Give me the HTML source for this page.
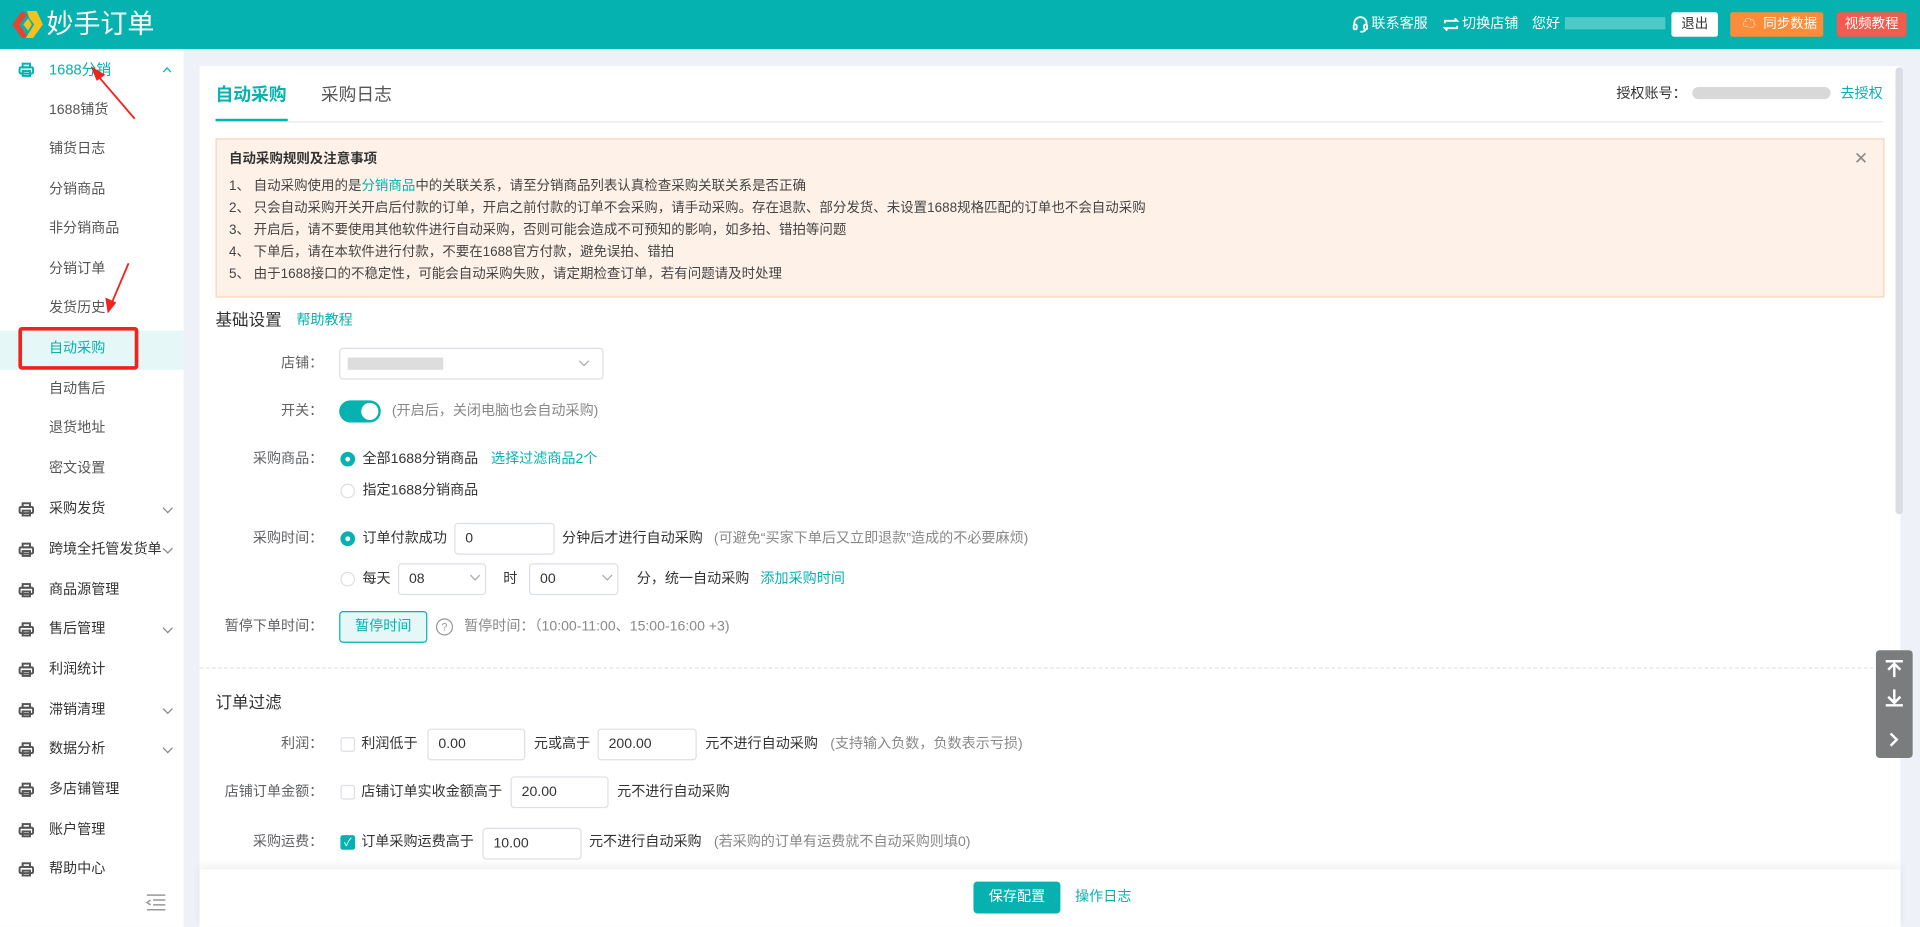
<!DOCTYPE html>
<html><head><meta charset="utf-8"><style>
html,body{margin:0;padding:0;width:1920px;height:927px;overflow:hidden;background:#eef1f8}
#w{position:absolute;left:0;top:0;width:1568px;height:757px;transform:scale(1.22449);transform-origin:0 0;font-family:"Liberation Sans","Noto Sans CJK SC",sans-serif;font-size:11.5px;color:#333}
#w div,#w span{position:absolute;white-space:nowrap}
.t{line-height:16px}
.hdr{left:0;top:0;width:1568px;height:40px;background:#05b2b0}
.side{left:0;top:40px;width:150px;height:717px;background:#fff}
.card{left:163px;top:54px;width:1389px;height:703px;background:#fff}
.teal{color:#05b2b0}
.lbl{color:#606266;text-align:right;width:120px}
.inp{border:1px solid #dcdfe6;border-radius:3px;background:#fff;box-sizing:border-box;height:26px;line-height:24px;padding-left:8px;color:#333}
.chev{width:5px;height:5px;border-right:1px solid #aaa;border-bottom:1px solid #aaa;transform:rotate(45deg)}
.radio{width:12px;height:12px;border-radius:50%;box-sizing:border-box;border:1px solid #dcdfe6;background:#fff}
.radio.on{border:4px solid #05b2b0}
.cb{width:12px;height:12px;border:1px solid #dcdfe6;border-radius:2px;box-sizing:border-box;background:#fff}
.mi{color:#333}
.sub{color:#555}
</style></head><body><div id="w">
<div class="hdr"></div>
<svg style="position:absolute;left:8px;top:7px" width="28" height="26" viewBox="0 0 28 26"><path d="M10 2 L2 13 L10 24 L15 24 L8 13 L14 5 Z" fill="#e8432f"/><path d="M14 2 L22 2 L27 13 L19 24 L13 24 L20 13 L16 8 Z" fill="#f6c21a"/><path d="M11 13 L15 8 L18 13 L15 18 Z" fill="#f6c21a"/></svg>
<div class="t" style="left:38px;top:8px;line-height:24px;font-size:22px;color:#fff">妙手订单</div>
<svg style="position:absolute;left:1104px;top:13px" width="14" height="14" viewBox="0 0 14 14" fill="none" stroke="#fff" stroke-width="1.5"><path d="M2 8 V6 a5 5 0 0 1 10 0 V8"/><rect x="1.5" y="7" width="2.5" height="4" rx="1"/><rect x="10" y="7" width="2.5" height="4" rx="1"/><path d="M11 11 q0 2 -4 2"/></svg>
<div class="t" style="left:1120px;top:12px;color:#fff">联系客服</div>
<svg style="position:absolute;left:1178px;top:13px" width="14" height="14" viewBox="0 0 14 14" fill="none" stroke="#fff" stroke-width="1.5"><path d="M2 6 V4 H12 L10 2"/><path d="M12 8 V10 H2 L4 12"/></svg>
<div class="t" style="left:1194px;top:12px;color:#fff">切换店铺</div>
<div class="t" style="left:1251px;top:12px;color:#fff">您好</div>
<div style="left:1278px;top:14px;width:82px;height:10px;background:#5fcfcc;opacity:.8"></div>
<div style="left:1365px;top:10px;width:38px;height:20px;background:#fff;border-radius:2px;text-align:center;line-height:20px;font-size:11px;color:#333">退出</div>
<div style="left:1413px;top:10px;width:76px;height:20px;background:#fb8c3a;border-radius:2px;line-height:20px;font-size:11px;color:#fff"><span style="left:10px;top:0">☁</span><span style="left:27px;top:0">同步数据</span></div>
<div style="left:1500px;top:10px;width:57px;height:20px;background:#f25b4d;border-radius:2px;text-align:center;line-height:20px;font-size:11px;color:#fff">视频教程</div>

<div class="side"></div>
<svg style="position:absolute;left:15px;top:51px" width="13" height="12" viewBox="0 0 13 12" fill="none" stroke="#05b2b0" stroke-width="1.6"><rect x="3.5" y="1" width="6" height="3"/><rect x="1" y="4" width="11" height="5" rx="1"/><rect x="3.5" y="7" width="6" height="4"/></svg>
<div class="t teal" style="left:40px;top:49px;font-size:12px">1688分销</div>
<div style="left:134px;top:56px;width:4px;height:4px;border-left:1px solid #05b2b0;border-top:1px solid #05b2b0;transform:rotate(45deg)"></div>
<div class="t sub" style="left:40px;top:82px">1688铺货</div>
<div class="t sub" style="left:40px;top:114px">铺货日志</div>
<div class="t sub" style="left:40px;top:147px">分销商品</div>
<div class="t sub" style="left:40px;top:179px">非分销商品</div>
<div class="t sub" style="left:40px;top:212px">分销订单</div>
<div class="t sub" style="left:40px;top:244px">发货历史</div>
<div style="left:0;top:270px;width:150px;height:32px;background:#e6f7f7"></div>
<div style="left:15px;top:267px;width:92px;height:29px;border:3px solid #f0241f;border-radius:3px"></div>
<div class="t teal" style="left:40px;top:277px">自动采购</div>
<div class="t sub" style="left:40px;top:310px">自动售后</div>
<div class="t sub" style="left:40px;top:342px">退货地址</div>
<div class="t sub" style="left:40px;top:375px">密文设置</div>
<svg style="position:absolute;left:0;top:40px" width="150" height="240" viewBox="0 40 150 240"><path d="M110 97 L80 62" stroke="#f0241f" stroke-width="1.5"/><path d="M74 54 L86 61 L79 66 Z" fill="#f0241f"/><path d="M105 215 L91 248" stroke="#f0241f" stroke-width="1.5"/><path d="M88 256 L86 243 L95 247 Z" fill="#f0241f"/></svg>

<div id="menu"></div>
<svg style="position:absolute;left:118px;top:730px" width="18" height="14" viewBox="0 0 18 14" stroke="#999" stroke-width="1.2" fill="none"><path d="M2 1 H17 M7 5 H17 M7 9 H17 M2 13 H17 M5 5 L2 7 L5 9"/></svg>

<div class="card"></div>
<div style="left:1548px;top:55px;width:6px;height:365px;background:#d9dce3;border-radius:3px"></div>
<div class="t teal" style="left:176px;top:68px;font-size:14.5px;line-height:20px;font-weight:bold">自动采购</div>
<div class="t" style="left:262px;top:68px;font-size:14.5px;line-height:20px;color:#555">采购日志</div>
<div style="left:176px;top:99px;width:1362px;height:1px;background:#e8e8e8"></div>
<div style="left:176px;top:97px;width:59px;height:2px;background:#05b2b0"></div>
<div class="t" style="left:1320px;top:69px">授权账号：</div>
<div style="left:1382px;top:71px;width:113px;height:10px;background:#d8d8d8;border-radius:5px"></div>
<div class="t teal" style="left:1503px;top:69px">去授权</div>

<div style="left:176px;top:113px;width:1361px;height:128px;background:#fef1e8;border:1px solid #fbd3b4"></div>
<div class="t" style="left:187px;top:122px;font-weight:bold;font-size:11px">自动采购规则及注意事项</div>
<div class="t" style="left:1514px;top:121px;font-size:14px;color:#888">✕</div>
<div class="t" style="left:187px;top:144px;font-size:11px;color:#444">1、 自动采购使用的是<span class="teal" style="position:static">分销商品</span>中的关联关系，请至分销商品列表认真检查采购关联关系是否正确</div>
<div class="t" style="left:187px;top:162px;font-size:11px;color:#444">2、 只会自动采购开关开启后付款的订单，开启之前付款的订单不会采购，请手动采购。存在退款、部分发货、未设置1688规格匹配的订单也不会自动采购</div>
<div class="t" style="left:187px;top:180px;font-size:11px;color:#444">3、 开启后，请不要使用其他软件进行自动采购，否则可能会造成不可预知的影响，如多拍、错拍等问题</div>
<div class="t" style="left:187px;top:198px;font-size:11px;color:#444">4、 下单后，请在本软件进行付款，不要在1688官方付款，避免误拍、错拍</div>
<div class="t" style="left:187px;top:216px;font-size:11px;color:#444">5、 由于1688接口的不稳定性，可能会自动采购失败，请定期检查订单，若有问题请及时处理</div>

<div class="t" style="left:176px;top:254px;font-size:13.5px">基础设置</div>
<div class="t teal" style="left:242px;top:254px;font-size:11.5px">帮助教程</div>

<div class="t lbl" style="left:144px;top:289px">店铺：</div>
<div class="inp" style="left:277px;top:284px;width:216px"></div>
<div style="left:284px;top:292px;width:78px;height:10px;background:#d5d5d5;opacity:.8"></div>
<div class="chev" style="left:474px;top:292px"></div>

<div class="t lbl" style="left:144px;top:328px">开关：</div>
<div style="left:277px;top:327px;width:34px;height:18px;background:#05b2b0;border-radius:9px"></div>
<div style="left:295px;top:329px;width:14px;height:14px;background:#fff;border-radius:50%"></div>
<div class="t" style="left:320px;top:328px;color:#888">(开启后，关闭电脑也会自动采购)</div>

<div class="t lbl" style="left:144px;top:367px">采购商品：</div>
<div class="radio on" style="left:278px;top:369px"></div>
<div class="t" style="left:296px;top:367px">全部1688分销商品</div>
<div class="t teal" style="left:401px;top:367px">选择过滤商品2个</div>
<div class="radio" style="left:278px;top:395px"></div>
<div class="t" style="left:296px;top:393px">指定1688分销商品</div>

<div class="t lbl" style="left:144px;top:432px">采购时间：</div>
<div class="radio on" style="left:278px;top:434px"></div>
<div class="t" style="left:296px;top:432px">订单付款成功</div>
<div class="inp" style="left:371px;top:427px;width:82px">0</div>
<div class="t" style="left:459px;top:432px">分钟后才进行自动采购</div>
<div class="t" style="left:583px;top:432px;color:#888">(可避免“买家下单后又立即退款”造成的不必要麻烦)</div>
<div class="radio" style="left:278px;top:467px"></div>
<div class="t" style="left:296px;top:465px">每天</div>
<div class="inp" style="left:325px;top:460px;width:72px">08</div><div class="chev" style="left:385px;top:467px"></div>
<div class="t" style="left:411px;top:465px">时</div>
<div class="inp" style="left:432px;top:460px;width:73px">00</div><div class="chev" style="left:493px;top:467px"></div>
<div class="t" style="left:520px;top:465px">分，统一自动采购</div>
<div class="t teal" style="left:621px;top:465px">添加采购时间</div>

<div class="t lbl" style="left:144px;top:504px">暂停下单时间：</div>
<div style="left:277px;top:499px;width:72px;height:26px;box-sizing:border-box;background:#e6f7f7;border:1px solid #05b2b0;border-radius:3px;text-align:center;line-height:24px;color:#05b2b0">暂停时间</div>
<div style="left:356px;top:505px;width:12px;height:12px;border:1px solid #999;border-radius:50%;font-size:9px;line-height:12px;text-align:center;color:#999">?</div>
<div class="t" style="left:379px;top:504px;color:#888">暂停时间：（10:00-11:00、15:00-16:00 +3)</div>

<div style="left:163px;top:545px;width:1372px;height:0;border-top:1px dashed #e3e3e3"></div>
<div class="t" style="left:176px;top:566px;font-size:13.5px">订单过滤</div>

<div class="t lbl" style="left:144px;top:600px">利润：</div>
<div class="cb" style="left:278px;top:602px"></div>
<div class="t" style="left:295px;top:600px">利润低于</div>
<div class="inp" style="left:349px;top:595px;width:80px">0.00</div>
<div class="t" style="left:436px;top:600px">元或高于</div>
<div class="inp" style="left:488px;top:595px;width:81px">200.00</div>
<div class="t" style="left:576px;top:600px">元不进行自动采购</div>
<div class="t" style="left:678px;top:600px;color:#888">(支持输入负数，负数表示亏损)</div>

<div class="t lbl" style="left:144px;top:639px">店铺订单金额：</div>
<div class="cb" style="left:278px;top:641px"></div>
<div class="t" style="left:295px;top:639px">店铺订单实收金额高于</div>
<div class="inp" style="left:417px;top:634px;width:80px">20.00</div>
<div class="t" style="left:504px;top:639px">元不进行自动采购</div>

<div class="t lbl" style="left:144px;top:680px">采购运费：</div>
<div class="cb" style="left:278px;top:682px;background:#05b2b0;border-color:#05b2b0;color:#fff;font-size:9px;line-height:10px;text-align:center">✓</div>
<div class="t" style="left:295px;top:680px">订单采购运费高于</div>
<div class="inp" style="left:394px;top:676px;width:81px">10.00</div>
<div class="t" style="left:481px;top:680px">元不进行自动采购</div>
<div class="t" style="left:583px;top:680px;color:#888">(若采购的订单有运费就不自动采购则填0)</div>

<div style="left:163px;top:710px;width:1389px;height:47px;background:#fff;box-shadow:0 -3px 6px rgba(0,0,0,.06)"></div>
<div style="left:795px;top:720px;width:71px;height:26px;background:#05b2b0;border-radius:3px;color:#fff;text-align:center;line-height:26px">保存配置</div>
<div class="t teal" style="left:878px;top:725px">操作日志</div>

<div style="left:1532px;top:531px;width:30px;height:88px;background:#7b7c7e;border-radius:3px"></div>
<svg style="position:absolute;left:1532px;top:531px" width="30" height="88" viewBox="0 0 30 88" fill="none" stroke="#fff" stroke-width="2"><path d="M8 9 H22 M15 22 V12 M10 16 L15 11 L20 16"/><path d="M8 45 H22 M15 32 V42 M10 38 L15 43 L20 38"/><path d="M12 68 L17 73 L12 78"/></svg>
</div>
<script>
var items=[["采购发货",416,1],["跨境全托管发货单",449,1],["商品源管理",482,0],["售后管理",514,1],["利润统计",547,0],["滞销清理",580,1],["数据分析",612,1],["多店铺管理",645,0],["账户管理",678,0],["帮助中心",710,0]];
var h="";items.forEach(function(a){
h+='<svg style="position:absolute;left:15px;top:'+(a[1]-6)+'px" width="13" height="12" viewBox="0 0 13 12" fill="none" stroke="#555" stroke-width="1.6"><rect x="3.5" y="1" width="6" height="3"/><rect x="1" y="4" width="11" height="5" rx="1"/><rect x="3.5" y="7" width="6" height="4"/></svg>';
h+='<div class="t mi" style="left:40px;top:'+(a[1]-8)+'px">'+a[0]+'</div>';
if(a[2])h+='<div class="chev" style="left:134px;top:'+(a[1]-4)+'px;border-color:#888"></div>';});
document.getElementById("menu").outerHTML=h;
</script>
</body></html>
